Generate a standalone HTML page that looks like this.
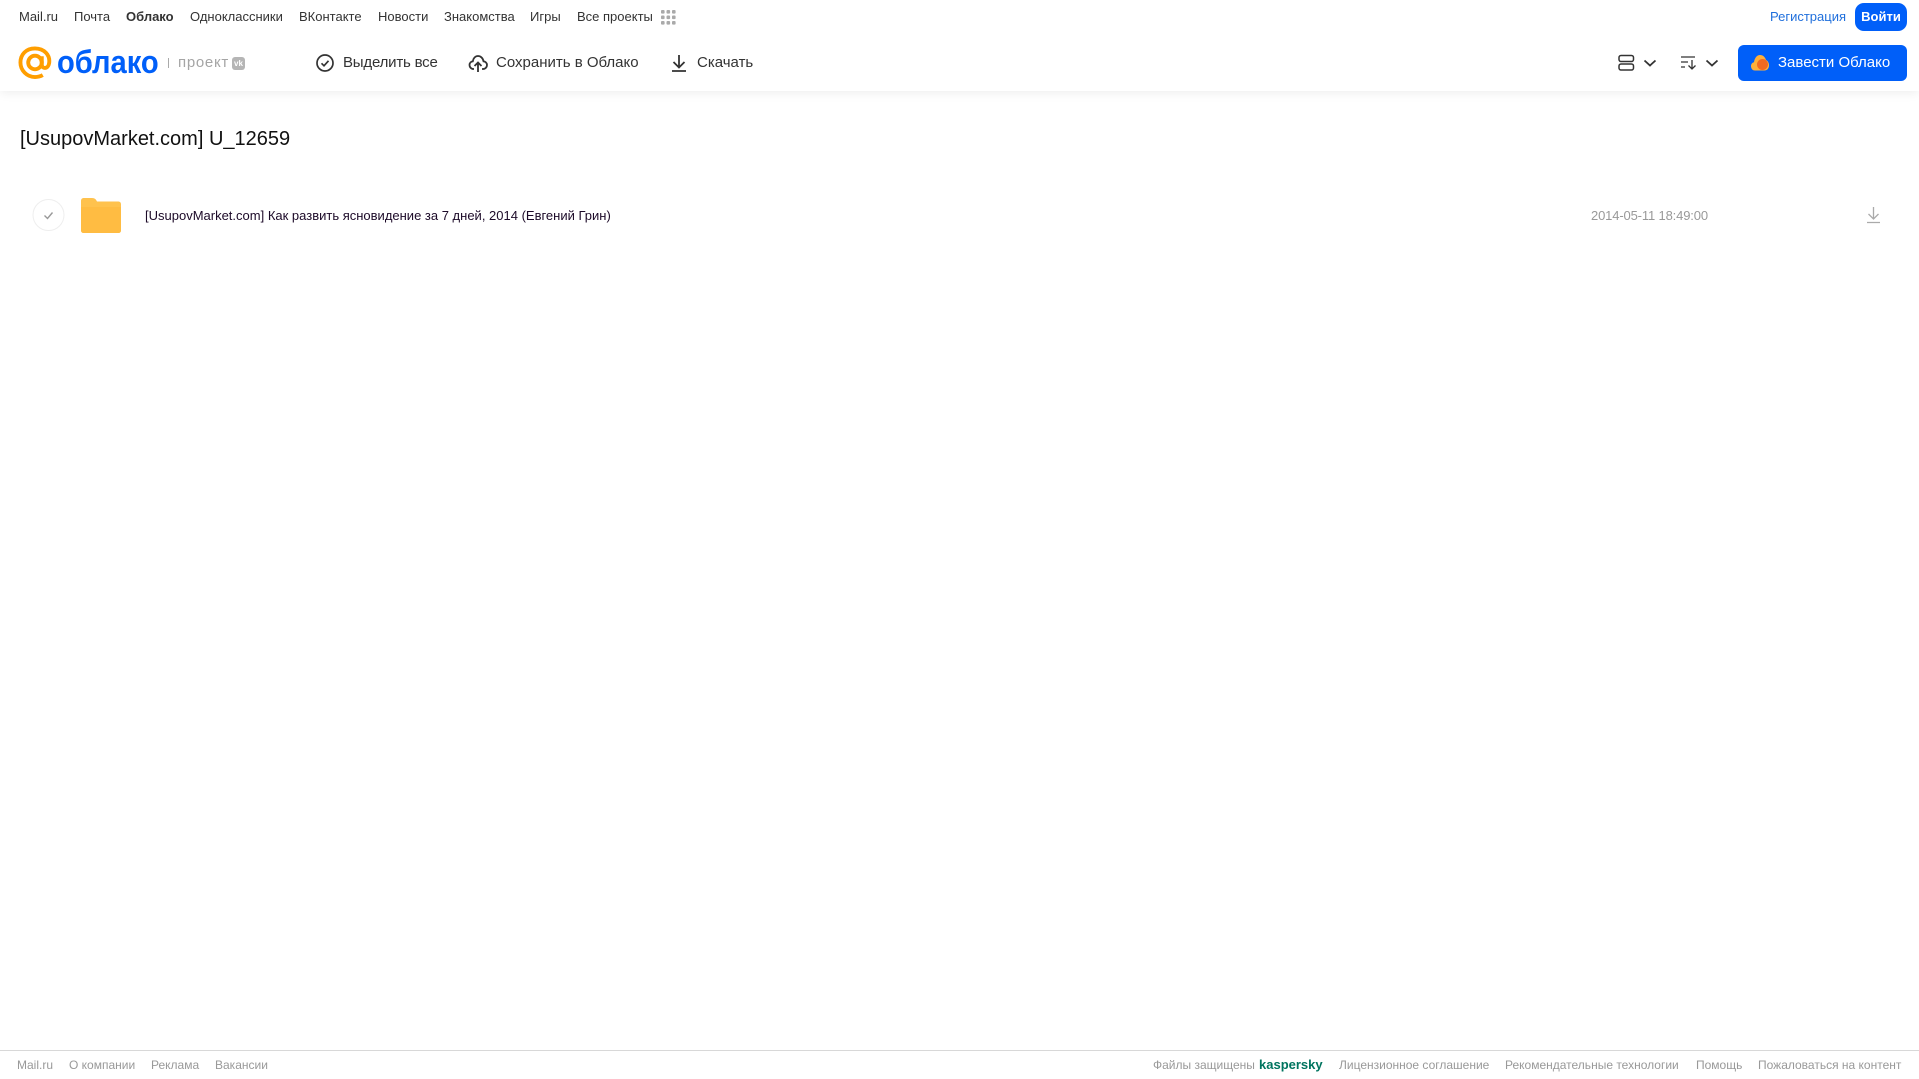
<!DOCTYPE html>
<html lang="ru"><head><meta charset="utf-8"><title>Облако</title>
<style>
html,body{margin:0;padding:0;background:#fff}
body{width:1919px;height:1079px;position:relative;overflow:hidden;font-family:"Liberation Sans",sans-serif}
.t{position:absolute;white-space:nowrap;line-height:20px}
.n{top:7px;font-size:13px;color:#333}
.b{top:53px;font-size:15px;color:#333;letter-spacing:0}
.f{top:1055px;font-size:12px;color:#999}
svg{position:absolute;display:block}
#hdr{position:absolute;left:0;top:0;width:1919px;height:91px;background:#fff;box-shadow:0 2px 10px rgba(0,0,0,.07)}
</style></head><body>
<div id="hdr"></div>
<span class="t n" style="left:19px">Mail.ru</span>
<span class="t n" style="left:74px">Почта</span>
<span class="t n" style="left:126px;font-weight:bold">Облако</span>
<span class="t n" style="left:190px">Одноклассники</span>
<span class="t n" style="left:299px">ВКонтакте</span>
<span class="t n" style="left:378px">Новости</span>
<span class="t n" style="left:444px">Знакомства</span>
<span class="t n" style="left:530px">Игры</span>
<span class="t n" style="left:577px">Все проекты</span>
<svg style="left:661px;top:10px" width="15" height="15" fill="#aaa"><rect x="0" y="0" width="3.6" height="3.6" rx="1"/><rect x="5.5" y="0" width="3.6" height="3.6" rx="1"/><rect x="11" y="0" width="3.6" height="3.6" rx="1"/><rect x="0" y="5.5" width="3.6" height="3.6" rx="1"/><rect x="5.5" y="5.5" width="3.6" height="3.6" rx="1"/><rect x="11" y="5.5" width="3.6" height="3.6" rx="1"/><rect x="0" y="11" width="3.6" height="3.6" rx="1"/><rect x="5.5" y="11" width="3.6" height="3.6" rx="1"/><rect x="11" y="11" width="3.6" height="3.6" rx="1"/></svg>
<span class="t n" style="left:1770px;color:#1f6fdc">Регистрация</span>
<div class="t" style="left:1855px;top:3px;width:52px;height:28px;line-height:27px;background:#005ff9;border-radius:9px;color:#fff;font-size:13px;font-weight:bold;text-align:center">Войти</div>

<svg style="left:18px;top:46px" width="34" height="33" viewBox="0 0 35 34" fill="none" stroke="#ff9e00" stroke-width="4"><circle cx="17.5" cy="17" r="7"/><path d="M24.5 10.5v8.5c0 5 6.500 5 7.500-1 1.500-8.500-5-15.500-14.500-15.500S2.500 9 2.500 17s6.500 15 15 15c3 0 5.500-.6 8-2"/></svg>
<span class="t" style="left:57px;top:43px;font-size:32px;line-height:38px;color:#005ff9;font-weight:bold;transform:scaleX(.91);transform-origin:0 0">облако</span>
<div style="position:absolute;left:168px;top:58px;width:1px;height:10px;background:#aaa"></div>
<span class="t" style="left:178px;top:53px;font-size:15px;color:#a5a5a5;letter-spacing:.7px">проект</span>
<div style="position:absolute;left:232px;top:57px;width:13px;height:13px;border-radius:3px;background:#b5b5b5;color:#fff;font-size:8px;line-height:13px;text-align:center;font-weight:bold">vk</div>

<svg style="left:315px;top:53px" width="20" height="20" fill="none" stroke="#333" stroke-width="1.700"><circle cx="10" cy="10" r="8"/><path d="M6.500 10.300l2.500 2.500 4.500-5" /></svg>
<span class="t b" style="left:343px;top:53px;letter-spacing:-.2px">Выделить все</span>
<svg style="left:468px;top:53px" width="20" height="20" fill="none" stroke="#333" stroke-width="1.800"><path d="M6 16H5.500C3 16 1.500 14 1.500 12c0-2 1.500-3.500 3.300-3.700C5.300 5 7.500 3 10 3s5 2 5.500 5.300c2 .2 3.500 1.800 3.500 3.700 0 2-1.500 4-4 4H14"/><path d="M10 19v-9M6.500 13l3.500-3.500 3.500 3.500"/></svg>
<span class="t b" style="left:496px;top:53px">Сохранить в Облако</span>
<svg style="left:670px;top:53px" width="18" height="20" fill="none" stroke="#333" stroke-width="1.800"><path d="M9 2v12M3.500 9l5.500 5.500 5.500-5.500M2 18h14"/></svg>
<span class="t b" style="left:697px;top:53px">Скачать</span>

<svg style="left:1618px;top:54px" width="18" height="18" fill="none" stroke="#333" stroke-width="1.500"><rect x="1" y="1.500" width="14.500" height="6" rx="2"/><rect x="1" y="10" width="14.500" height="6" rx="2"/></svg>
<svg style="left:1643px;top:59px" width="14" height="9" fill="none" stroke="#333" stroke-width="1.800"><path d="M1.500 1.500L7 6.500l5.500-5"/></svg>
<svg style="left:1680px;top:55px" width="18" height="16" fill="none" stroke="#333" stroke-width="1.300"><path d="M1 2h14M1 7h7M1 12h4M12 5v9M8.500 10.500L12 14l3.500-3.500"/></svg>
<svg style="left:1705px;top:59px" width="14" height="9" fill="none" stroke="#333" stroke-width="1.800"><path d="M1.500 1.500L7 6.500l5.500-5"/></svg>

<div style="position:absolute;left:1738px;top:45px;width:169px;height:36px;background:#005ff9;border-radius:6px"></div>
<svg style="left:1750px;top:54px" width="20" height="17"><path d="M5 16.500C2 16.500 1 14 1 12c0-2 1.500-3.500 3-3.700C4.500 4 7 1 10 1c3 0 5 2 6 5 2 1 3 3 3 5.500 0 3-2 5-4.500 5z" fill="#ffb03a"/><circle cx="12.500" cy="10.500" r="5.500" fill="#f26a22"/></svg>
<span class="t" style="left:1778px;top:53px;font-size:15px;color:#fff">Завести Облако</span>

<span class="t" style="left:20px;top:127px;font-size:20px;line-height:24px;color:#111">[UsupovMarket.com] U_12659</span>

<svg style="left:32px;top:198px" width="34" height="34" fill="none"><circle cx="16.500" cy="17" r="15.500" stroke="#eee" stroke-width="1"/><path d="M12.500 17.500l3 3 5-6" stroke="#999" stroke-width="1.400"/></svg>
<svg style="left:81px;top:198px" width="40" height="35"><path d="M3 0h8c3 0 4 1.500 5 3.500h21c2 0 3 1 3 3V32c0 2-1 3-3 3H3c-2 0-3-1-3-3V3c0-2 1-3 3-3z" fill="#ffc24d"/><path d="M0 9h40v23c0 2-1 3-3 3H3c-2 0-3-1-3-3z" fill="#ffbc42"/></svg>
<span class="t" style="left:145px;top:206px;font-size:13px;color:#1c0a28">[UsupovMarket.com] Как развить ясновидение за 7 дней, 2014 (Евгений Грин)</span>
<span class="t" style="left:1591px;top:206px;font-size:13px;color:#999;letter-spacing:-.15px">2014-05-11 18:49:00</span>
<svg style="left:1866px;top:206px" width="15" height="18" fill="none" stroke="#aaa" stroke-width="1.300"><path d="M7.500 1v11.500M2.500 8l5 5 5-5M1 16.500h13"/></svg>

<div style="position:absolute;left:0;top:1050px;width:1919px;height:1px;background:#d8d8d8"></div>
<span class="t f" style="left:17px">Mail.ru</span>
<span class="t f" style="left:69px">О компании</span>
<span class="t f" style="left:151px">Реклама</span>
<span class="t f" style="left:215px">Вакансии</span>
<span class="t f" style="left:1153px">Файлы защищены</span>
<span class="t f" style="left:1259px;color:#00745f;font-weight:bold;font-size:13px">kaspersky</span>
<span class="t f" style="left:1339px">Лицензионное соглашение</span>
<span class="t f" style="left:1505px">Рекомендательные технологии</span>
<span class="t f" style="left:1696px">Помощь</span>
<span class="t f" style="left:1758px">Пожаловаться на контент</span>
</body></html>
